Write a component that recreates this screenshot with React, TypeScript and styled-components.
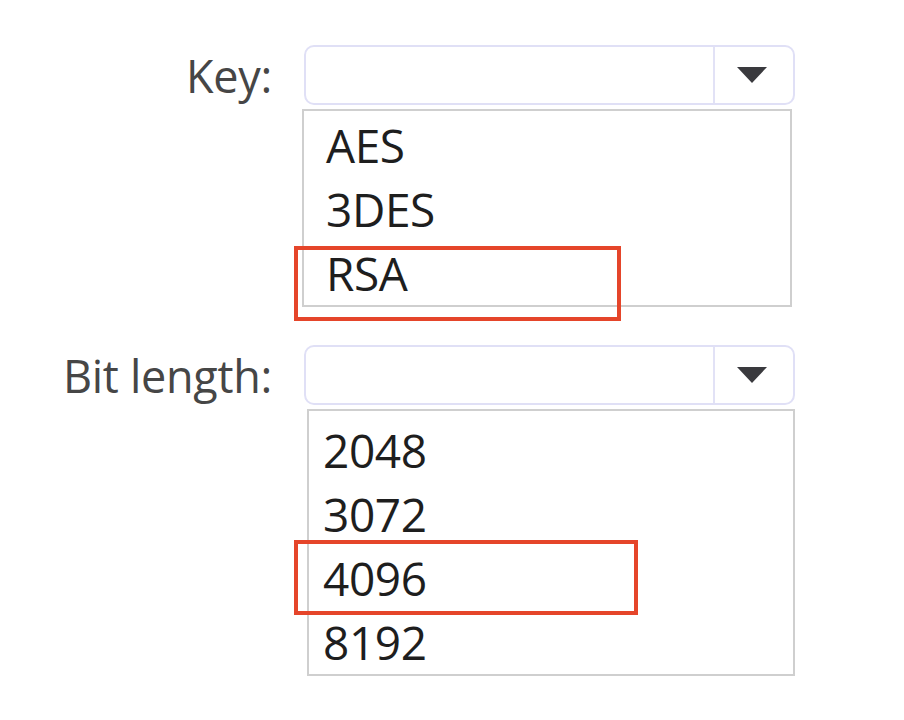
import React from "react";
import styled, { createGlobalStyle } from "styled-components";

const Global = createGlobalStyle`
  html, body { margin: 0; padding: 0; background: #ffffff; }
  body { font-family: "Open Sans", "Noto Sans", sans-serif; }
`;

const Page = styled.div`
  width: 904px;
  height: 720px;
  background: #ffffff;
  padding-top: 45px;
  box-sizing: border-box;
  display: flex;
  flex-direction: column;
  gap: 38px;
`;

const FieldRow = styled.div`
  display: grid;
  grid-template-columns: 272px 491px;
  column-gap: 32px;
  align-items: start;
`;

const Label = styled.div`
  height: 60px;
  display: flex;
  align-items: center;
  justify-content: flex-end;
  font-size: 45px;
  color: #464646;
  letter-spacing: -0.3px;
`;

const FieldColumn = styled.div`
  display: flex;
  flex-direction: column;
  gap: 4px;
`;

const Combo = styled.div`
  height: 60px;
  box-sizing: border-box;
  border: 2px solid #e0e0f6;
  border-radius: 10px;
  background: #ffffff;
  display: grid;
  grid-template-columns: 1fr 78px;
`;

const ComboValue = styled.div`
  border-right: 2px solid #e2e2f6;
`;

const ArrowCell = styled.div`
  display: flex;
  align-items: center;
  justify-content: center;
  padding-right: 4px;
`;

const List = styled.div<{ $shift: number; $width: number; $padTop: number }>`
  position: relative;
  margin-left: ${(p) => p.$shift}px;
  width: ${(p) => p.$width}px;
  box-sizing: border-box;
  border: 2px solid #cfcfcf;
  background: #ffffff;
  padding: ${(p) => p.$padTop}px 0 0 0;
  display: flex;
  flex-direction: column;
`;

const Item = styled.div<{ $indent: number }>`
  height: 64px;
  display: flex;
  align-items: center;
  padding-left: ${(p) => p.$indent}px;
  font-size: 46px;
  color: #1e1e1e;
  letter-spacing: -0.4px;
`;

const Highlight = styled.div<{ $left: number; $top: number; $w: number }>`
  position: absolute;
  left: ${(p) => p.$left}px;
  top: ${(p) => p.$top}px;
  width: ${(p) => p.$w}px;
  height: 75px;
  box-sizing: border-box;
  border: 4px solid #e5452a;
  pointer-events: none;
`;

const Arrow = () => (
  <svg width="32" height="18" viewBox="0 0 32 18">
    <path d="M1 1 L31 1 L16 17 Z" fill="#3a3a3e" />
  </svg>
);

type FieldProps = {
  label: string;
  items: string[];
  shift: number;
  width: number;
  padTop: number;
  indent: number;
  hl: { left: number; top: number; w: number };
};

const Field = ({ label, items, shift, width, padTop, indent, hl }: FieldProps) => (
  <FieldRow>
    <Label>{label}</Label>
    <FieldColumn>
      <Combo>
        <ComboValue />
        <ArrowCell>
          <Arrow />
        </ArrowCell>
      </Combo>
      <List $shift={shift} $width={width} $padTop={padTop}>
        {items.map((it) => (
          <Item key={it} $indent={indent}>
            {it}
          </Item>
        ))}
        <Highlight $left={hl.left} $top={hl.top} $w={hl.w} />
      </List>
    </FieldColumn>
  </FieldRow>
);

export default function App() {
  return (
    <>
      <Global />
      <Page>
        <Field
          label="Key:"
          items={["AES", "3DES", "RSA"]}
          shift={-2}
          width={490}
          padTop={2}
          indent={22}
          hl={{ left: -10, top: 135, w: 327 }}
        />
        <Field
          label="Bit length:"
          items={["2048", "3072", "4096", "8192"]}
          shift={3}
          width={488}
          padTop={7}
          indent={14}
          hl={{ left: -15, top: 129, w: 344 }}
        />
      </Page>
    </>
  );
}
